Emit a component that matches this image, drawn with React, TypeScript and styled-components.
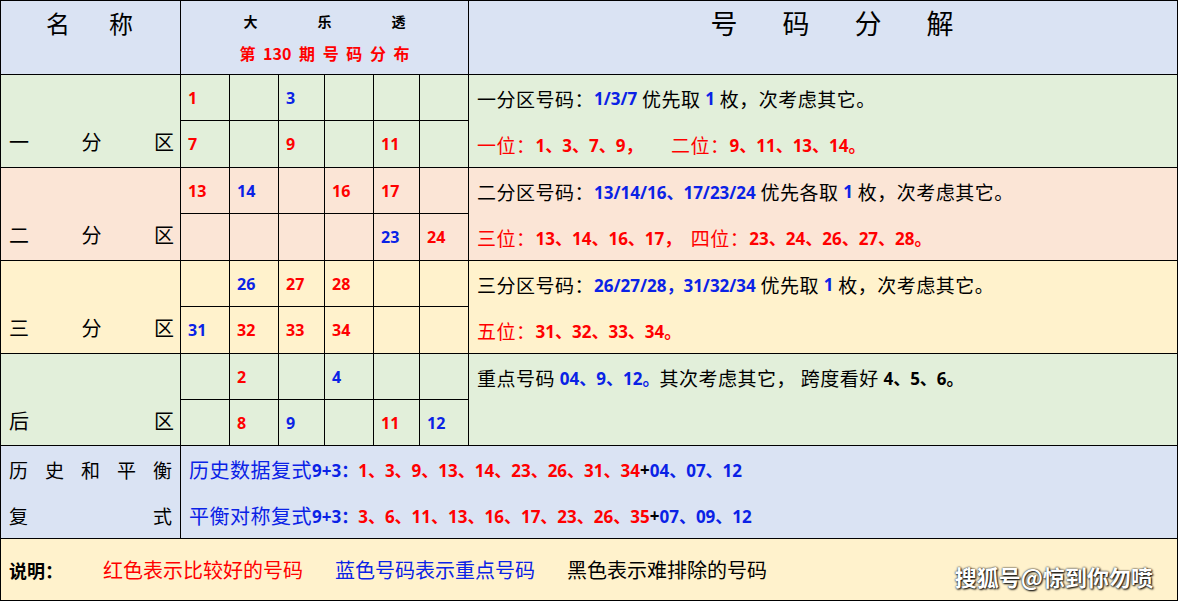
import React from "react";
import styled, { createGlobalStyle } from "styled-components";

const G = createGlobalStyle`
  body { margin:0; background:#fff; font-family:"Noto Sans CJK SC","Noto Sans",sans-serif; }
`;
const R = "#ff0000", B = "#0a22e6";

const Table = styled.table`
  border-collapse: collapse; table-layout: fixed; width: 1178px;
  td { border: 1.5px solid #000; padding: 0; vertical-align: middle; }
`;
const Row = styled.tr<{ h: number }>` height: ${p => p.h}px; `;
const Cell = styled.td<{ bg: string }>` background: ${p => p.bg}; `;
const Num = styled.td<{ bg: string; c?: string }>`
  background:${p => p.bg}; color:${p => p.c || R};
  font-family:"Open Sans","Noto Sans",sans-serif; font-weight:700; font-size:16px; padding-left:7px !important;
`;
const Name = styled.div`
  display:flex; justify-content:space-between; align-items:flex-end; height:100%;
  padding: 0 6px 8px 8px; font-size:20px; box-sizing:border-box; min-height:86px;
`;
const Lines = styled.div`
  display:flex; flex-direction:column; justify-content:space-around; height:100%; padding-left:8px; font-size:19px; letter-spacing:0.5px;
`;
const L = styled.div`height:46px; display:flex; align-items:center; white-space:pre;`;
const Span = styled.span<{ c?: string; b?: boolean }>`
  color:${p => p.c || "#000"}; font-weight:${p => (p.b ? 700 : 400)};
  font-size:${p => (p.b ? "17px" : "inherit")}; letter-spacing:0;
  font-family:${p => p.b ? `"Open Sans","Noto Sans CJK SC",sans-serif` : "inherit"};
`;
const HeadTitle = styled.div`
  display:flex; justify-content:space-around; font-size:27px; padding:0 8px; letter-spacing:2px;
`;
const Center = styled.div`display:flex; flex-direction:column; align-items:center; gap:10px; font-size:14px;`;
const Note = styled.div`
  display:flex; align-items:center; gap:32px; font-size:20px; padding:0 8px; height:60px; position:relative;
`;
const Mark = styled.div`
  position:absolute; right:24px; bottom:8px; color:#fff; font-size:22px; font-weight:700;
  text-shadow:0 0 2px #000, 1px 1px 2px #000;
`;

type C = [string, string?] | null;

const N = (bg: string, c: C, i: number) =>
  <Num key={i} bg={bg} c={c ? (c[1] === "b" ? B : R) : undefined}>{c ? c[0] : ""}</Num>;

export default function App() {
  const g = "#e2efda", p = "#fbe5d6", y = "#fff2cc", bl = "#dae3f3";
  const a = (n: string): C => [n];
  const b = (n: string): C => [n, "b"];
  return (
    <>
      <G />
      <Table>
        <colgroup>
          <col style={{ width: 180 }} /><col style={{ width: 49 }} /><col style={{ width: 49 }} /><col style={{ width: 46 }} />
          <col style={{ width: 49 }} /><col style={{ width: 46 }} /><col style={{ width: 49 }} /><col />
        </colgroup>
        <tbody>
          <Row h={74}>
            <Cell bg={bl} style={{ verticalAlign: "top" }}><HeadTitle style={{ fontSize: 24, paddingTop: 4, justifyContent: "space-evenly" }}><span>名</span><span>称</span></HeadTitle></Cell>
            <Cell bg={bl} colSpan={6}>
              <Center>
                <div style={{ display: "flex", gap: 60, fontWeight: 700 }}><span>大</span><span>乐</span><span>透</span></div>
                <div style={{ color: R, fontWeight: 700, fontSize: 16, wordSpacing: 4 }}>第 130 期 号 码 分 布</div>
              </Center>
            </Cell>
            <Cell bg={bl} style={{ verticalAlign: "top" }}><HeadTitle style={{ padding: "2px 200px 0 220px" }}><span>号</span><span>码</span><span>分</span><span>解</span></HeadTitle></Cell>
          </Row>
          <Row h={46}>
            <Cell bg={g} rowSpan={2}><Name><span>一</span><span>分</span><span>区</span></Name></Cell>
            {[a("1"), null, b("3"), null, null, null].map((c, i) => N(g, c, i))}
            <Cell bg={g} rowSpan={2}><Lines>
              <L>一分区号码：<Span c={B} b>1/3/7</Span> 优先取 <Span c={B} b>1</Span> 枚，次考虑其它。</L>
              <L style={{ color: R }}>一位：<Span c={R} b>1、3、7、9，</Span>      二位：<Span c={R} b>9、11、13、14。</Span></L>
            </Lines></Cell>
          </Row>
          <Row h={47}>{[a("7"), null, a("9"), null, a("11"), null].map((c, i) => N(g, c, i))}</Row>
          <Row h={46}>
            <Cell bg={p} rowSpan={2}><Name><span>二</span><span>分</span><span>区</span></Name></Cell>
            {[a("13"), b("14"), null, a("16"), a("17"), null].map((c, i) => N(p, c, i))}
            <Cell bg={p} rowSpan={2}><Lines>
              <L>二分区号码：<Span c={B} b>13/14/16、17/23/24</Span> 优先各取 <Span c={B} b>1</Span> 枚，次考虑其它。</L>
              <L style={{ color: R }}>三位：<Span c={R} b>13、14、16、17，</Span>  四位：<Span c={R} b>23、24、26、27、28。</Span></L>
            </Lines></Cell>
          </Row>
          <Row h={47}>{[null, null, null, null, b("23"), a("24")].map((c, i) => N(p, c, i))}</Row>
          <Row h={46}>
            <Cell bg={y} rowSpan={2}><Name><span>三</span><span>分</span><span>区</span></Name></Cell>
            {[null, b("26"), a("27"), a("28"), null, null].map((c, i) => N(y, c, i))}
            <Cell bg={y} rowSpan={2}><Lines>
              <L>三分区号码：<Span c={B} b>26/27/28，31/32/34</Span> 优先取 <Span c={B} b>1</Span> 枚，次考虑其它。</L>
              <L style={{ color: R }}>五位：<Span c={R} b>31、32、33、34。</Span></L>
            </Lines></Cell>
          </Row>
          <Row h={47}>{[b("31"), a("32"), a("33"), a("34"), null, null].map((c, i) => N(y, c, i))}</Row>
          <Row h={46}>
            <Cell bg={g} rowSpan={2}><Name><span>后</span><span>区</span></Name></Cell>
            {[null, a("2"), null, b("4"), null, null].map((c, i) => N(g, c, i))}
            <Cell bg={g} rowSpan={2} style={{ verticalAlign: "top" }}><Lines>
              <L>重点号码 <Span c={B} b>04、9、12。</Span>其次考虑其它， 跨度看好 <Span b>4、5、6。</Span></L>
            </Lines></Cell>
          </Row>
          <Row h={46}>{[null, a("8"), b("9"), null, a("11"), b("12")].map((c, i) => N(g, c, i))}</Row>
          <Row h={93}>
            <Cell bg={bl}><Lines style={{ fontSize: 19, letterSpacing: 0 }}>
              <L style={{ justifyContent: "space-between", paddingRight: 8 }}><span>历</span><span>史</span><span>和</span><span>平</span><span>衡</span></L>
              <L style={{ justifyContent: "space-between", paddingRight: 8 }}><span>复</span><span>式</span></L>
            </Lines></Cell>
            <Cell bg={bl} colSpan={7}><Lines style={{ fontSize: 20 }}>
              <L style={{ color: B }}>历史数据复式<Span c={B} b>9+3：</Span><Span c={R} b>1、3、9、13、14、23、26、31、34</Span><Span b>+</Span><Span c={B} b>04、07、12</Span></L>
              <L style={{ color: B }}>平衡对称复式<Span c={B} b>9+3：</Span><Span c={R} b>3、6、11、13、16、17、23、26、35</Span><Span b>+</Span><Span c={B} b>07、09、12</Span></L>
            </Lines></Cell>
          </Row>
          <Row h={62}>
            <Cell bg={y} colSpan={8}><Note>
              <span style={{ fontWeight: 700, fontSize: 18, marginRight: 8 }}>说明：</span>
              <span style={{ color: R }}>红色表示比较好的号码</span>
              <span style={{ color: B }}>蓝色号码表示重点号码</span>
              <span>黑色表示难排除的号码</span>
              <Mark>搜狐号@惊到你勿喷</Mark>
            </Note></Cell>
          </Row>
        </tbody>
      </Table>
    </>
  );
}
